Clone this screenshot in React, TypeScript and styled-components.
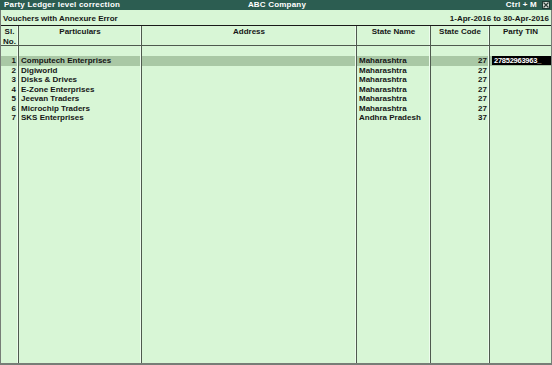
import React from 'react';
import styled, { createGlobalStyle } from 'styled-components';

const GlobalStyle = createGlobalStyle`
  html, body {
    margin: 0;
    padding: 0;
    background: #d8f6d6;
  }
  body {
    font-family: "Liberation Sans", Arial, sans-serif;
  }
`;

const rows = [
    { no: 1, name: 'Computech Enterprises', state: 'Maharashtra', code: '27', tin: '27852963963' },
    { no: 2, name: 'Digiworld', state: 'Maharashtra', code: '27', tin: '' },
    { no: 3, name: 'Disks & Drives', state: 'Maharashtra', code: '27', tin: '' },
    { no: 4, name: 'E-Zone Enterprises', state: 'Maharashtra', code: '27', tin: '' },
    { no: 5, name: 'Jeevan Traders', state: 'Maharashtra', code: '27', tin: '' },
    { no: 6, name: 'Microchip Traders', state: 'Maharashtra', code: '27', tin: '' },
    { no: 7, name: 'SKS Enterprises', state: 'Andhra Pradesh', code: '37', tin: '' },
];

function App() {
    return (
        <Screen>
            <GlobalStyle/>
            <TitleBar>
                <TitleText>Party Ledger level correction</TitleText>
                <TitleCenter>ABC Company</TitleCenter>
                <TitleRight>
                    <TitleText>Ctrl + M</TitleText>
                    <CloseBox>
                        <svg width="6" height="6" viewBox="0 0 6 6">
                            <path d="M0.5 0.5 L5.5 5.5 M5.5 0.5 L0.5 5.5" stroke="#2c3c36" strokeWidth="1.2"/>
                        </svg>
                    </CloseBox>
                </TitleRight>
            </TitleBar>
            <Body>
                <SubHeader>
                    <span>Vouchers with Annexure Error</span>
                    <span>1-Apr-2016 to 30-Apr-2016</span>
                </SubHeader>
                <Grid>
                    <HeadCell>Sl.<br/>No.</HeadCell>
                    <HeadCell>Particulars</HeadCell>
                    <HeadCell>Address</HeadCell>
                    <HeadCell>State Name</HeadCell>
                    <HeadCell>State Code</HeadCell>
                    <HeadCell $last>Party TIN</HeadCell>

                    <Cell/><Cell/><Cell/><Cell/><Cell/><Cell $last/>

                    {rows.map((r, i) => {
                        const sel = i === 0;
                        return (
                            <React.Fragment key={r.no}>
                                <Cell $align="right" $selected={sel}>{r.no}</Cell>
                                <Cell $selected={sel}>{r.name}</Cell>
                                <Cell $selected={sel}/>
                                <Cell $selected={sel}>{r.state}</Cell>
                                <Cell $align="right" $selected={sel}>{r.code}</Cell>
                                <Cell $last $selected={sel}>
                                    {r.tin && <TinInput>{r.tin}_</TinInput>}
                                </Cell>
                            </React.Fragment>
                        );
                    })}

                    <Cell/><Cell/><Cell/><Cell/><Cell/><Cell $last/>
                </Grid>
            </Body>
        </Screen>
    );
}

export default App;

const Screen = styled.div`
  width: 552px;
  height: 365px;
  display: flex;
  flex-direction: column;
  background: #d8f6d6;
  color: #161616;
  font-size: 8px;
  font-weight: bold;
  overflow: hidden;
`;

const TitleBar = styled.div`
  height: 10px;
  display: grid;
  grid-template-columns: 1fr auto 1fr;
  align-items: center;
  padding: 0 2px 0 4px;
  background: #2c5d51;
  color: #ffffff;
  line-height: 10px;
`;

const TitleText = styled.span`
  letter-spacing: 0.2px;
  white-space: nowrap;
`;

const TitleCenter = styled(TitleText)`
  text-align: center;
`;

const TitleRight = styled.div`
  display: flex;
  justify-content: flex-end;
  align-items: center;
  gap: 5px;
`;

const CloseBox = styled.span`
  width: 8px;
  height: 8px;
  box-sizing: border-box;
  border: 1px solid #1e3a33;
  background: #d9ded9;
  display: flex;
  align-items: center;
  justify-content: center;
`;

const Body = styled.div`
  flex: 1;
  display: flex;
  flex-direction: column;
  border-left: 1px solid #777d77;
  border-right: 1px solid #777d77;
  border-bottom: 2px solid #777d77;
  min-height: 0;
`;

const SubHeader = styled.div`
  height: 16px;
  display: flex;
  justify-content: space-between;
  align-items: flex-end;
  padding: 0 2px 1px 2px;
  box-sizing: border-box;
  border-bottom: 1px solid #1a1a1a;
  line-height: 10px;
`;

const Grid = styled.div`
  flex: 1;
  display: grid;
  grid-template-columns: 18px 123px 215px 74px 59px 1fr;
  grid-template-rows: 20px 10px repeat(7, 9.5px) 1fr;
`;

const HeadCell = styled.div<{ $last?: boolean }>`
  text-align: center;
  line-height: 10px;
  padding-top: 1px;
  border-bottom: 1px solid #4f5a4f;
  border-right: ${(p) => (p.$last ? 'none' : '1px solid #4f5a4f')};
  box-shadow: ${(p) => (p.$last ? 'none' : 'inset -1px 0 0 #edfced')};
  white-space: nowrap;
`;

const Cell = styled.div<{ $align?: string; $selected?: boolean; $last?: boolean }>`
  text-align: ${(p) => p.$align || 'left'};
  line-height: 9.5px;
  padding: 0 2px;
  white-space: nowrap;
  overflow: hidden;
  background: ${(p) => (p.$selected ? '#a9c8a5' : 'transparent')};
  border-right: ${(p) => (p.$last ? 'none' : '1px solid #4f5a4f')};
  box-shadow: ${(p) => (p.$last ? 'none' : 'inset -1px 0 0 #edfced')};
`;

const TinInput = styled.div`
  margin: 0 -2px 0 0;
  padding-left: 2px;
  background: #000000;
  color: #ffffff;
  font-size: 7.5px;
  letter-spacing: -0.25px;
  height: 9px;
  line-height: 9px;
`;
